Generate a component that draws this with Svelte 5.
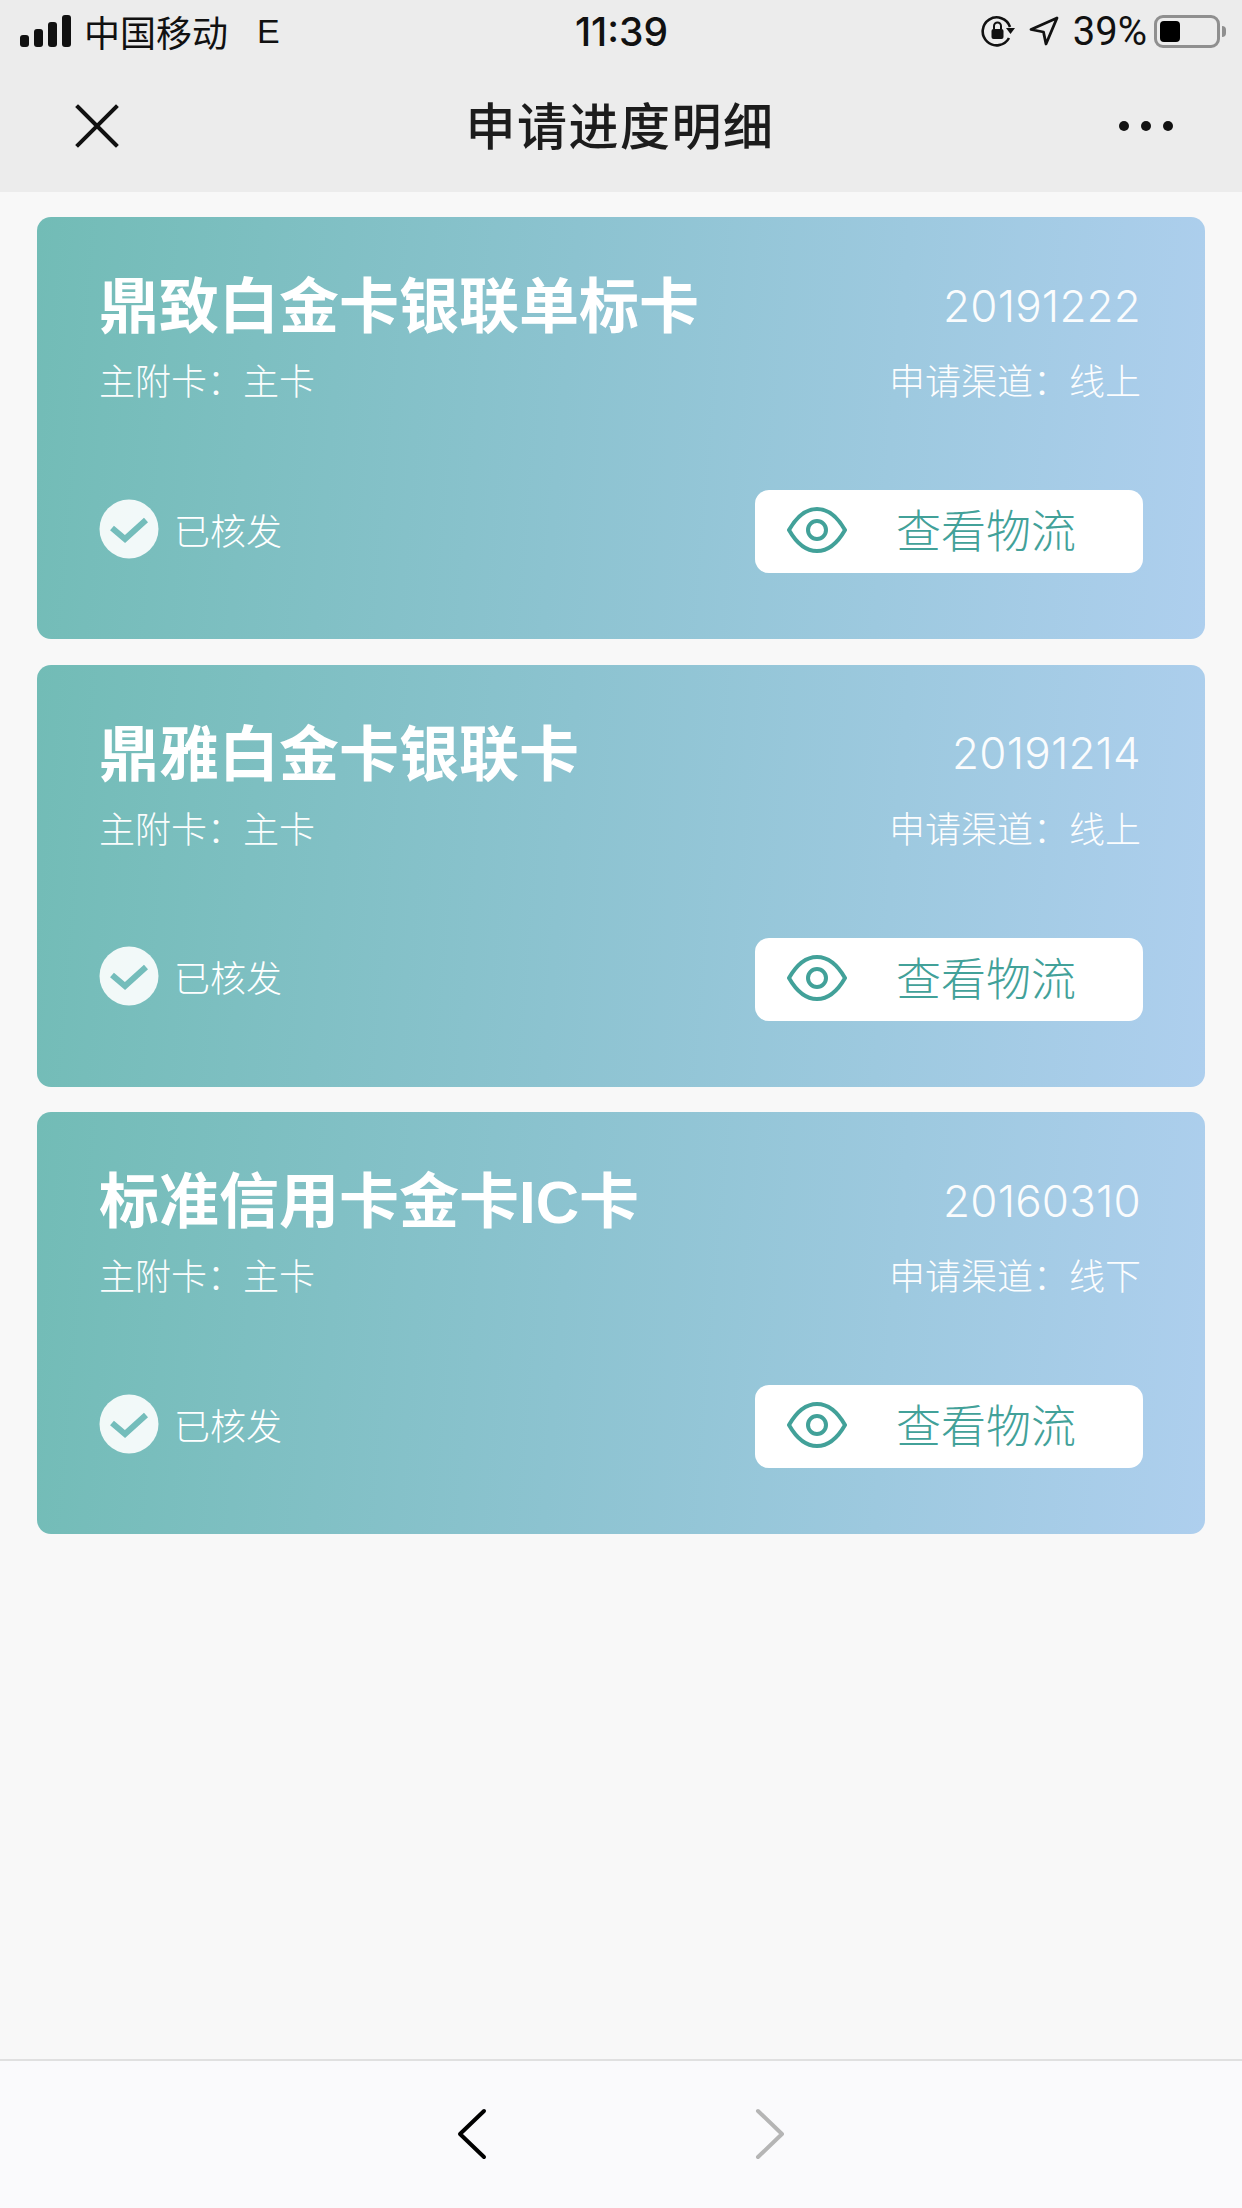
<script lang="ts">
const cards = [
  { name: '鼎致白金卡银联单标卡', date: '20191222', channel: '线上' },
  { name: '鼎雅白金卡银联卡', date: '20191214', channel: '线上' },
  { name: '标准信用卡金卡IC卡', date: '20160310', channel: '线下' }
];
</script>

<div class="page">
  <header class="top">
    <div class="status">
      <div class="status-left">
        <svg class="signal" width="51" height="32" viewBox="0 0 51 32">
          <rect x="0" y="20" width="9" height="12" rx="3" />
          <rect x="14" y="14" width="9" height="18" rx="3" />
          <rect x="28" y="7" width="9" height="25" rx="3" />
          <rect x="42" y="0" width="9" height="32" rx="3" />
        </svg>
        <span class="carrier">中国移动</span>
        <span class="net">E</span>
      </div>
      <div class="time">11:39</div>
      <div class="status-right">
        <svg width="34" height="34" viewBox="0 0 34 34" fill="none" stroke="#111" stroke-width="2.6">
          <path d="M28 24a14 14 0 1 1 1-11" />
          <path d="M25 14h9l-4.500 6z" fill="#111" stroke="none" />
          <rect x="10.500" y="15" width="12" height="10" rx="2" fill="#111" stroke="none" />
          <path d="M13 15v-3a3.500 3.500 0 0 1 7 0v3" stroke-width="2" />
        </svg>
        <svg class="arrow" width="30" height="30" viewBox="0 0 30 30" fill="none" stroke="#111" stroke-width="2.800" stroke-linejoin="round">
          <path d="M28 2 2 13.500l12.500 2.500 2.500 12z" />
        </svg>
        <span class="pct">39%</span>
        <div class="battery"><div class="level"></div></div>
        <div class="nub"></div>
      </div>
    </div>
    <div class="nav">
      <svg width="44" height="44" viewBox="0 0 44 44" stroke="#111" stroke-width="4" stroke-linecap="square">
        <path d="M3 3 41 41M41 3 3 41" />
      </svg>
      <h1>申请进度明细</h1>
      <div class="dots"><i></i><i></i><i></i></div>
    </div>
  </header>

  <main class="list">
    {#each cards as card}
      <section class="card">
        <div class="row">
          <div class="name">{card.name}</div>
          <div class="date">{card.date}</div>
        </div>
        <div class="row sub">
          <span>主附卡：主卡</span>
          <span>申请渠道：{card.channel}</span>
        </div>
        <div class="row bottom">
          <div class="state">
            <svg width="60" height="60" viewBox="0 0 60 60">
              <circle cx="30" cy="30" r="29.500" fill="#fff" fill-opacity="0.9" />
              <path d="M13 29 26 40 47 21" fill="none" stroke="#74bdbb" stroke-width="6" />
            </svg>
            <span>已核发</span>
          </div>
          <button class="track">
            <svg width="60" height="46" viewBox="0 0 60 46" fill="none" stroke="#42a199" stroke-width="4">
              <path d="M2 23C10 9 19 2 30 2s20 7 28 21c-8 14-17 21-28 21S10 37 2 23z" />
              <circle cx="30" cy="23" r="9" />
            </svg>
            <span>查看物流</span>
          </button>
        </div>
      </section>
    {/each}
  </main>

  <footer class="bottom-bar">
    <svg width="30" height="52" viewBox="0 0 30 52" fill="none" stroke="#000" stroke-width="4" stroke-linecap="round" stroke-linejoin="round">
      <path d="M27 3 3 26l24 23" />
    </svg>
    <svg width="30" height="52" viewBox="0 0 30 52" fill="none" stroke="#b5b5b5" stroke-width="4" stroke-linecap="round" stroke-linejoin="round">
      <path d="M3 3l24 23L3 49" />
    </svg>
  </footer>
</div>

<style>
:global(body) {
  margin: 0;
  background: #f8f8f8;
}
.page {
  width: 1242px;
  height: 2208px;
  display: flex;
  flex-direction: column;
  font-family: "Liberation Sans", "Noto Sans CJK SC", sans-serif;
  color: #111;
  overflow: hidden;
}
.top {
  height: 192px;
  background: #ececec;
  flex-shrink: 0;
}
.status {
  height: 62px;
  padding: 0 16px 0 20px;
  display: grid;
  grid-template-columns: 1fr auto 1fr;
  align-items: center;
  font-size: 36px;
}
.status-left, .status-right {
  display: flex;
  align-items: center;
}
.status-right {
  justify-content: flex-end;
}
.signal {
  fill: #111;
  margin-right: 13px;
}
.carrier {
  font-weight: 400;
}
.net {
  margin-left: 29px;
  font-size: 34px;
}
.time {
  font-size: 39px;
  font-family: Inter, sans-serif;
  font-weight: 500;
  margin-right: 3px;
}
.arrow {
  margin-left: 14px;
}
.pct {
  margin-left: 14px;
  font-family: Roboto, sans-serif;
  font-weight: 400;
  font-size: 40px;
}
.battery {
  width: 66px;
  height: 33px;
  margin-left: 7px;
  border: 3px solid #8f8f8f;
  border-radius: 9px;
  box-sizing: border-box;
  padding: 3px;
}
.level {
  width: 20px;
  height: 100%;
  background: #000;
  border-radius: 4px;
}
.nub {
  width: 4px;
  height: 11px;
  margin-left: 2px;
  background: #8f8f8f;
  border-radius: 0 4px 4px 0;
}
.nav {
  height: 127px;
  padding: 0 69px 0 75px;
  display: grid;
  grid-template-columns: 1fr auto 1fr;
  align-items: center;
}
h1 {
  margin: 0 0 5px -8px;
  font-size: 50px;
  font-weight: 500;
  letter-spacing: 1.500px;
  color: #1c1c1c;
}
.dots {
  display: flex;
  justify-content: flex-end;
  gap: 12px;
}
.dots i {
  width: 10px;
  height: 10px;
  border-radius: 50%;
  background: #111;
}
.list {
  flex: 1;
  padding: 25px 37px 0;
  display: flex;
  flex-direction: column;
  gap: 25.5px;
}
.card {
  height: 422px;
  box-sizing: border-box;
  padding: 55px 62px 66px;
  background: linear-gradient(95deg, #72bcb6 0%, #8cc3d0 45%, #aecfee 100%);
  border-radius: 14px;
  color: #fff;
  display: flex;
  flex-direction: column;
}
.row {
  display: flex;
  justify-content: space-between;
  align-items: center;
}
.name {
  font-size: 60px;
  line-height: 72px;
  font-weight: 700;
}
.date {
  font-family: Inter, sans-serif;
  font-weight: 300;
  font-size: 44px;
  letter-spacing: 0.200px;
  opacity: 0.95;
  margin: 0 2px 5px 0;
}
.sub {
  margin-top: 17px;
  font-size: 36px;
  line-height: 44px;
  font-weight: 300;
  padding-right: 2px;
  opacity: 0.97;
}
.bottom {
  margin-top: auto;
}
.state {
  display: flex;
  align-items: center;
  gap: 15px;
  margin-top: -6px;
  font-size: 36px;
  font-weight: 300;
}
.track {
  width: 388px;
  height: 83px;
  box-sizing: border-box;
  padding: 0 0 3px 32px;
  border: 0;
  border-radius: 14px;
  background: #fff;
  color: #42a199;
  font: inherit;
  font-size: 45px;
  font-weight: 300;
  display: flex;
  align-items: center;
  gap: 49px;
}
.track span {
  margin-bottom: 3px;
}
.bottom-bar {
  height: 149px;
  box-sizing: border-box;
  padding-bottom: 2px;
  border-top: 2px solid #e0e0e0;
  background: #fafafc;
  flex-shrink: 0;
  display: flex;
  justify-content: center;
  align-items: center;
  gap: 268px;
}
</style>
